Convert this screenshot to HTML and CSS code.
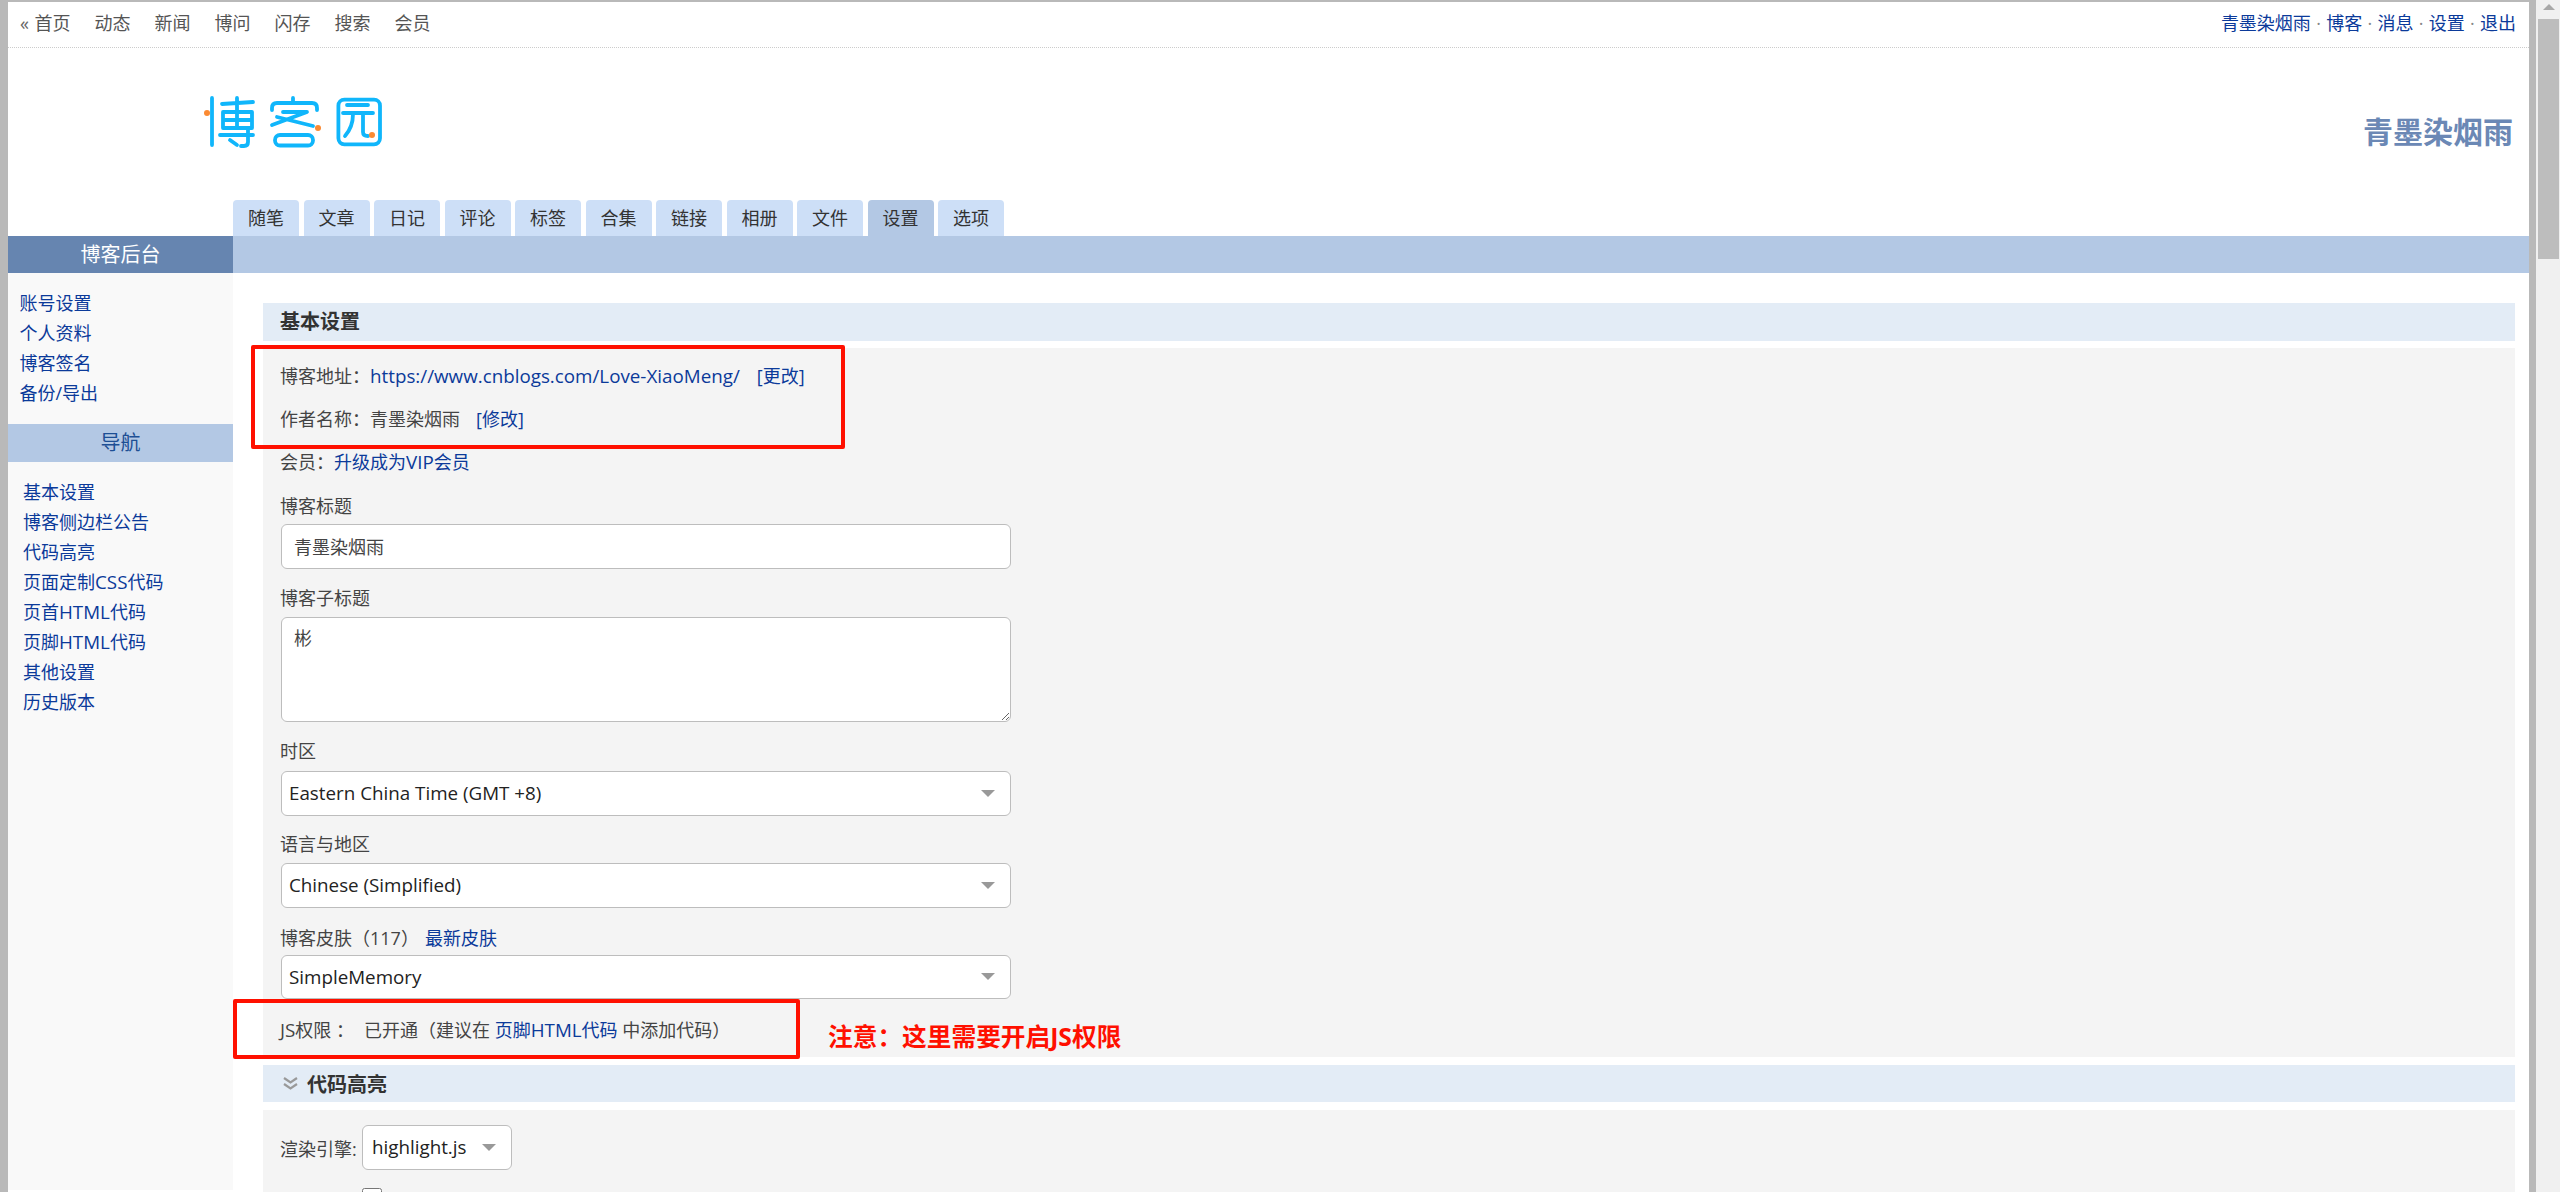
FILE: index.html
```html
<!DOCTYPE html>
<html lang="zh-CN">
<head>
<meta charset="utf-8">
<title>博客后台 - 设置</title>
<link rel="stylesheet" href="styles.css">
</head>
<body>
<div class="frame">
  <div class="page">
    <nav class="topbar">
      <div class="topbar-left">
        <a class="muted"><span class="laquo">«</span> 首页</a>
        <a class="muted">动态</a><a class="muted">新闻</a><a class="muted">博问</a><a class="muted">闪存</a><a class="muted">搜索</a><a class="muted">会员</a>
      </div>
      <div class="topbar-right"><a>青墨染烟雨</a> · <a>博客</a> · <a>消息</a> · <a>设置</a> · <a>退出</a></div>
    </nav>
    <header class="masthead">
      <svg class="logo" viewBox="0 0 190 62" width="190" height="62" aria-label="博客园">
        <g fill="none" stroke="#10b6fb" stroke-width="3.800" stroke-linecap="round" stroke-linejoin="round">
          <path d="M12 8V55"/>
          <path d="M22 14L53 12M37 8V38M23 22H52V38H23ZM23 30H52M20 45H53M48 39V52Q48 56 44 56H41M30 50L37 55"/>
          <path d="M93 8V12M72 20V18Q72 13 77 13H112Q117 13 117 18V20M83 22H107L72 35M77 27L113 36"/>
          <rect x="75" y="45" width="38" height="10.500" rx="5"/>
          <rect x="138.400" y="9.700" width="41.600" height="44.600" rx="6"/>
          <path d="M147 15H168M143 23H173M153 24Q153 37 145 46M163 24V42Q163 46 168 46"/>
        </g>
        <g fill="#fb8a32"><circle cx="7" cy="23" r="3"/><circle cx="118" cy="38" r="3"/><circle cx="172" cy="45" r="3"/></g>
      </svg>
      <div class="blogname">青墨染烟雨</div>
    </header>
    <div class="tabs">
      <a class="tab">随笔</a><a class="tab">文章</a><a class="tab">日记</a><a class="tab">评论</a><a class="tab">标签</a><a class="tab">合集</a><a class="tab">链接</a><a class="tab">相册</a><a class="tab">文件</a><a class="tab active">设置</a><a class="tab">选项</a>
    </div>
    <div class="layout">
      <aside class="sidebar">
        <div class="side-title">博客后台</div>
        <ul class="side-list first-list">
          <li><a>账号设置</a></li><li><a>个人资料</a></li><li><a>博客签名</a></li><li><a>备份/导出</a></li>
        </ul>
        <div class="side-sub">导航</div>
        <ul class="side-list second-list">
          <li><a>基本设置</a></li><li><a>博客侧边栏公告</a></li><li><a>代码高亮</a></li><li><a>页面定制<span class="lat">CSS</span>代码</a></li><li><a>页首<span class="lat">HTML</span>代码</a></li><li><a>页脚<span class="lat">HTML</span>代码</a></li><li><a>其他设置</a></li><li><a>历史版本</a></li>
        </ul>
      </aside>
      <main class="content">
        <div class="content-bar"></div>
        <section class="sections">
          <h2 class="sec-head">基本设置</h2>
          <div class="panel">
            <div class="annot annot-a"></div>
            <p class="line">博客地址：<a class="lat">https://www.cnblogs.com/Love-XiaoMeng/</a><a class="bracket wide">[更改]</a></p>
            <p class="line l2">作者名称：青墨染烟雨<a class="bracket">[修改]</a></p>
            <p class="line l3">会员：<a>升级成为<span class="lat">VIP</span>会员</a></p>
            <label class="lab lab-title">博客标题</label>
            <input class="field text" type="text" value="青墨染烟雨">
            <label class="lab">博客子标题</label>
            <textarea class="field area">彬</textarea>
            <label class="lab lab-tz">时区</label>
            <div class="field select"><span class="lat">Eastern China Time (GMT +8)</span><i class="caret"></i></div>
            <label class="lab lab-lang">语言与地区</label>
            <div class="field select"><span class="lat">Chinese (Simplified)</span><i class="caret"></i></div>
            <label class="lab lab-skin">博客皮肤（117）<a class="newest">最新皮肤</a></label>
            <div class="field select skin"><span class="lat">SimpleMemory</span><i class="caret"></i></div>
            <p class="line js"><span class="jslab"><span class="lat">JS</span>权限 ：</span>已开通（建议在 <a>页脚<span class="lat">HTML</span>代码</a> 中添加代码）</p>
            <div class="annot annot-b"></div>
            <div class="note">注意：这里需要开启JS权限</div>
          </div>
          <h2 class="sec-head sec-two">
            <svg class="chev" viewBox="0 0 15 13" width="15" height="13"><path d="M1 1L7.500 5.500L14 1M1 7L7.500 11.500L14 7" fill="none" stroke="#999" stroke-width="2.200"/></svg><span class="sec-text">代码高亮</span></h2>
          <div class="panel panel-two">
            <div class="engine"><span class="row-label">渲染引擎:</span><div class="field select small"><span class="lat">highlight.js</span><i class="caret"></i></div></div>
            <div class="check-row"><span class="row-label">显示行号</span><input class="check" type="checkbox"></div>
          </div>
        </section>
      </main>
    </div>
  </div>
  <div class="scrollbar"><i class="sb-up"></i><div class="sb-thumb"></div></div>
</div>
</body>
</html>
```
FILE: styles.css
```css
* { box-sizing: border-box; }
html, body { margin: 0; height: 100%; overflow: hidden; }
body { font-family: "Open Sans", "Noto Sans CJK SC", sans-serif; font-size: 18px; color: #444; background: #fff; }
a { color: #0b3a9a; text-decoration: none; }
.lat { font-size: 18.8px; }
.frame { display: flex; height: 1192px; width: 2560px; background: #b9b9b9; padding-top: 2px; }
.page { width: 2521px; margin-left: 8px; background: #fff; height: 1190px; overflow: hidden; flex: none; }
.scrollbar { margin-left: 7px; width: 24px; height: 1192px; margin-top: -2px; background: #f0f0f0; position: relative; flex: none; }
.sb-up { position: absolute; left: 7px; top: 4px; border: 6px solid transparent; border-top: 0; border-bottom: 6px solid #a8a8a8; }
.sb-thumb { position: absolute; left: 2px; top: 19px; width: 21px; height: 240px; background: #bdbdbd; }
.topbar { height: 46px; border-bottom: 1px dotted #ccc; display: flex; justify-content: space-between; padding: 0 13px 0 12px; line-height: 43px; }
.topbar-left { display: flex; }
.muted { color: #555; margin-right: 24px; }
.laquo { color: #666; margin-right: 1px; }
.topbar-right { color: #888; word-spacing: 0.6px; }
.masthead { height: 152px; position: relative; }
.logo { position: absolute; left: 192px; top: 42px; }
.blogname { position: absolute; right: 16px; top: 64px; font-size: 30px; font-weight: 700; line-height: 40px; color: #6b88b5; }
.tabs { display: flex; gap: 4.5px; padding-left: 225px; height: 36px; }
.tab { width: 66px; height: 36px; background: #cddff7; color: #333; text-align: center; line-height: 36px; border-radius: 4px 4px 0 0; }
.tab.active { background: #b3c8e4; }
.layout { display: flex; height: 954px; }
.sidebar { width: 225px; background: #f9f9f9; flex: none; }
.side-title { height: 37px; background: #6685b0; color: #fff; text-align: center; line-height: 37px; font-size: 20px; }
.side-sub { height: 38px; background: #b3c8e4; color: #1d4f94; text-align: center; line-height: 38px; margin-top: 16px; font-size: 20px; }
.side-list { list-style: none; margin: 0; padding: 15px 0 0 12px; }
.side-list li { height: 30px; line-height: 30px; }
.first-list { padding-left: 11.5px; }
.second-list { padding-left: 15px; }
.content { flex: 1; }
.content-bar { height: 37px; background: #b3c8e4; }
.sections { padding: 30px 14px 0 30px; }
.sec-head { margin: 0; height: 38px; line-height: 38px; background: #e3ecf6; font-size: 20px; font-weight: 700; color: #333; padding-left: 17px; }
.sec-two { display: flex; align-items: center; margin-top: 8px; height: 37px; line-height: 37px; padding-left: 20px; }
.sec-text { position: relative; top: 1px; }
.chev { margin-right: 9px; flex: none; }
.panel { background: #f4f4f4; margin-top: 7px; height: 709px; position: relative; padding: 13px 17px 0; }
.panel-two { margin-top: 8px; height: 100px; padding-top: 15px; }
.line { margin: 0; line-height: 30px; white-space: nowrap; }
.l2, .l3 { margin-top: 13px; }
.bracket { margin-left: 16px; }
.wide { margin-left: 17px; }
.newest { margin-left: 6px; }
.js { margin-top: 16px; }
.jslab { margin-right: 10px; }
.lab { display: block; line-height: 26px; margin-top: 16px; margin-bottom: 5px; }
.lab-title { margin-top: 16px; }
.lab-tz { margin-top: 16px; margin-bottom: 7px; }
.lab-lang { margin-top: 15px; margin-bottom: 6px; }
.lab-skin { margin-top: 17px; margin-bottom: 4px; }
.field { display: block; width: 730px; height: 45px; border: 1px solid #bdbdbd; border-radius: 6px; background: #fff; font: inherit; color: #444; padding: 0 12px; outline: 0; margin: 0 0 0 1px; }
.text { padding-bottom: 2px; }
.area { height: 105px; padding-top: 6px; margin-top: 6px; resize: vertical; }
.select { display: flex; align-items: center; justify-content: space-between; color: #222; padding: 0 15px 1px 7px; }
.skin { height: 44px; }
.caret { border: 7px solid transparent; border-top-color: #999; border-bottom: 0; }
.annot { position: absolute; border: 4px solid #ff1000; border-radius: 2px; z-index: 2; pointer-events: none; }
.annot-a { left: -12px; top: -3px; width: 594px; height: 104px; }
.annot-b { left: -30px; top: 651px; width: 567px; height: 60px; }
.note { position: absolute; left: 565px; top: 671px; font-size: 24.7px; line-height: 36px; font-weight: 700; color: #ff1000; white-space: nowrap; }
.engine { display: flex; align-items: center; }
.row-label { width: 81px; flex: none; white-space: nowrap; }
.small { width: 150px; padding-left: 9px; }
.check-row { display: flex; align-items: flex-start; margin-top: 18px; line-height: 26px; }
.check-row .row-label { margin-top: 1px; }
.check { width: 20px; height: 20px; margin: 0 0 0 1px; }
```
